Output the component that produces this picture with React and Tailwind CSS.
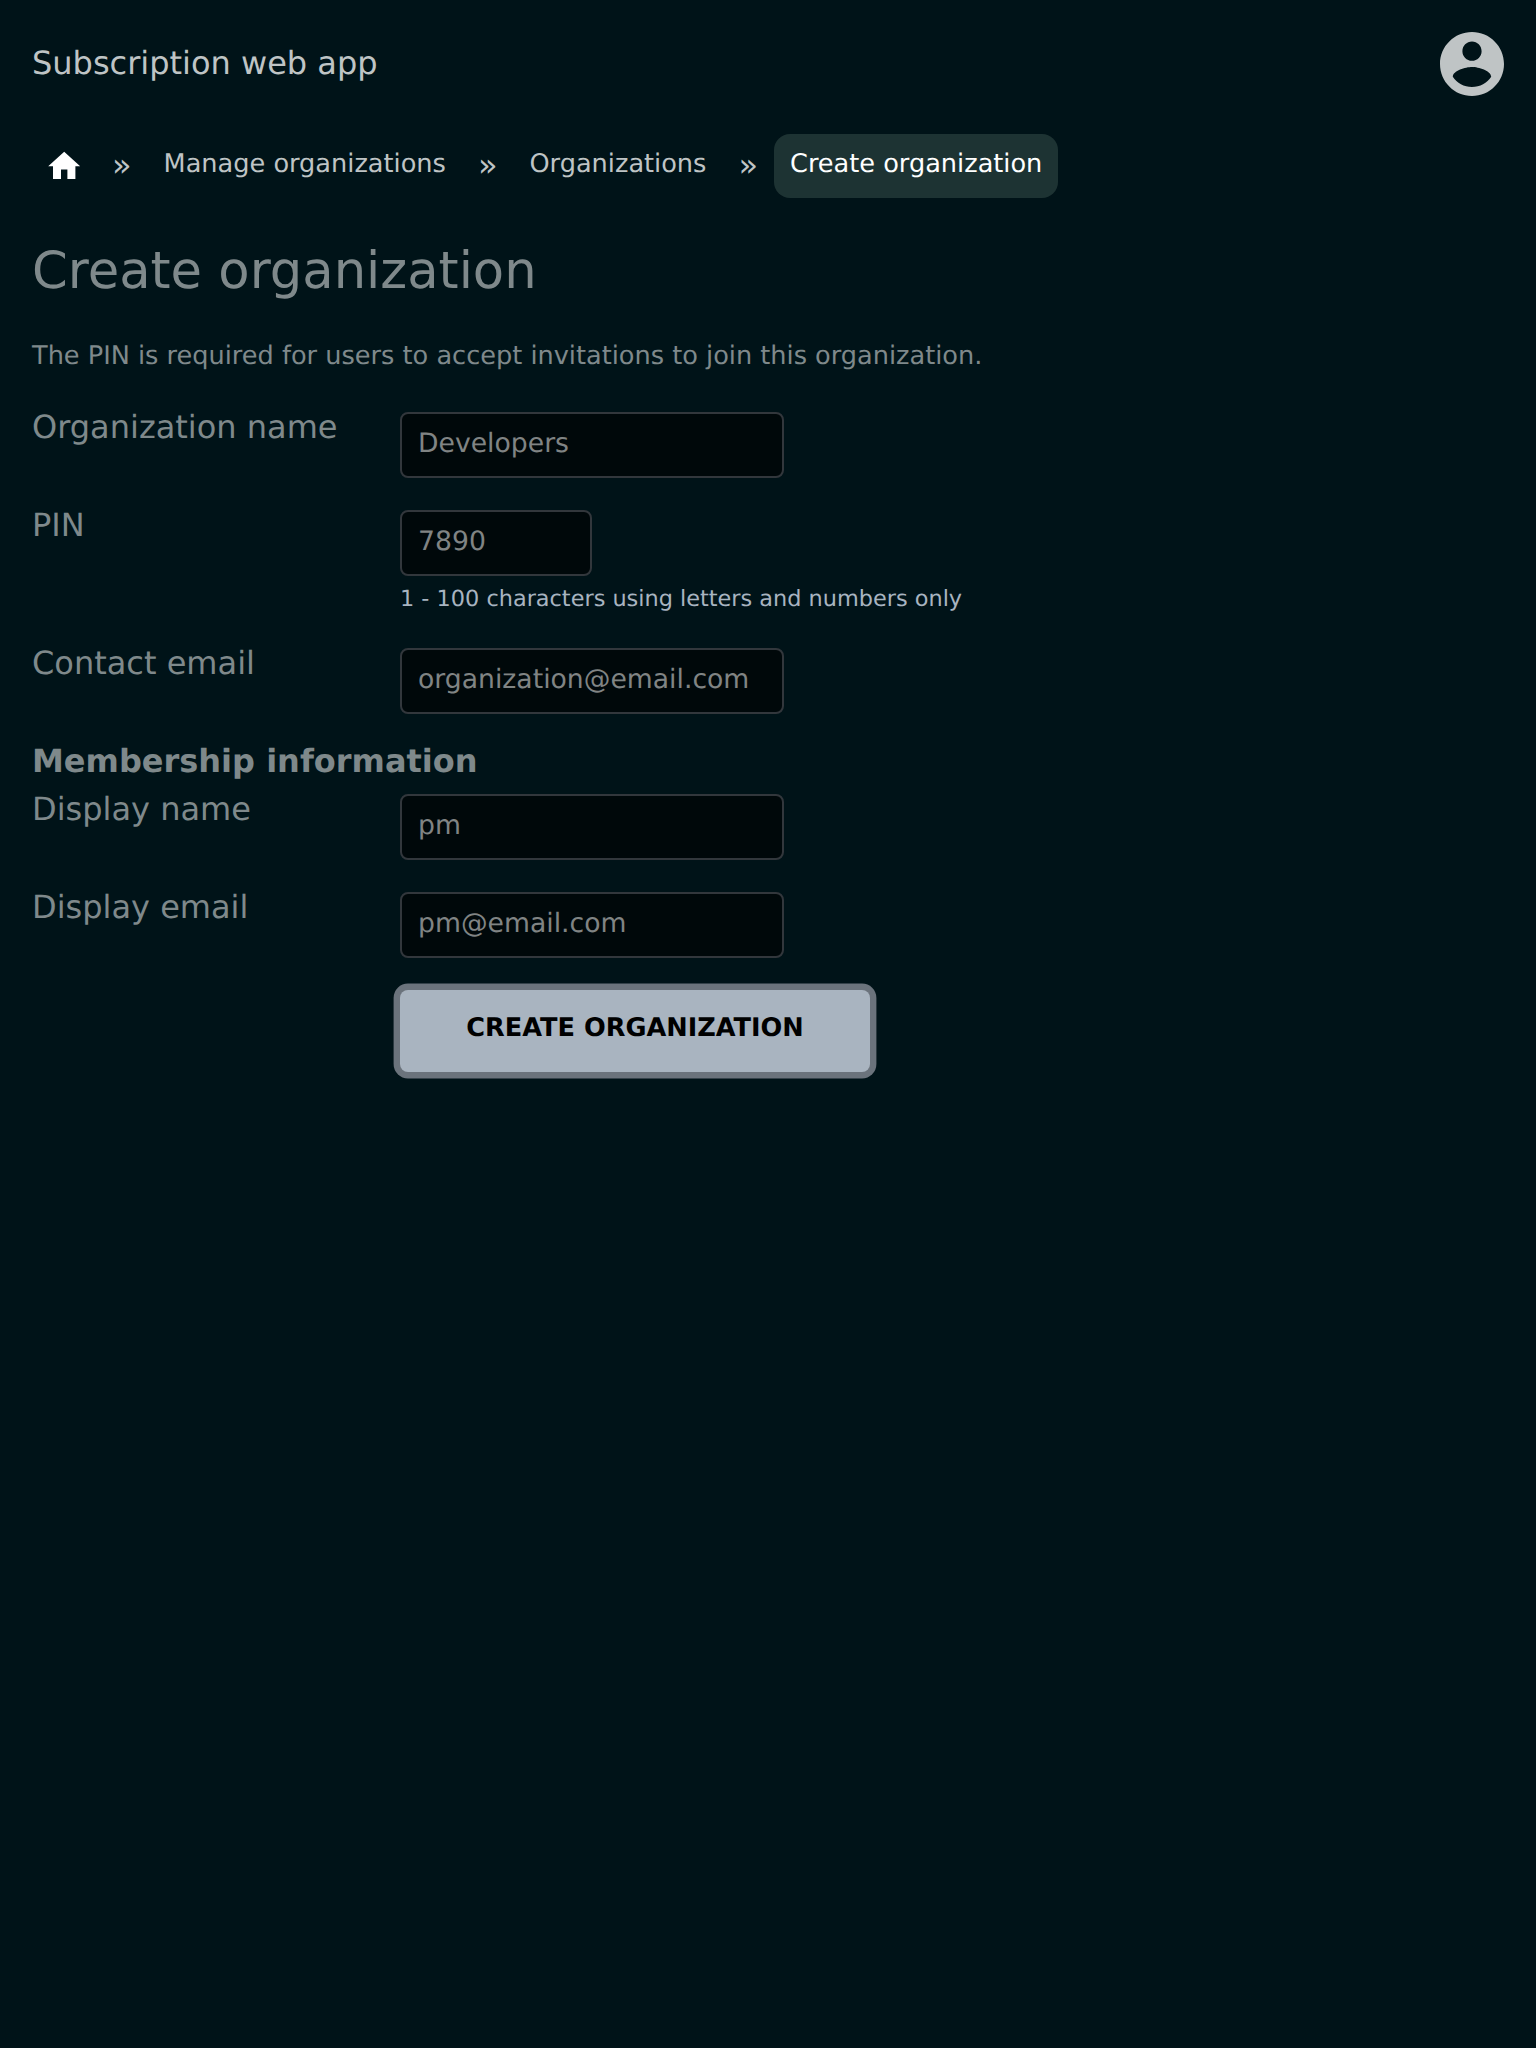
const field =
  'block h-[66px] rounded-lg border-2 border-[#32373c] bg-[#00080a] px-4 pb-1 text-[26.667px] text-[#808484] outline-none';

function Chevron() {
  return <span className="w-[19.6px] text-[32px] leading-[62px] text-[#bfc4c5]">»</span>;
}

function Crumb({ children }) {
  return (
    <a className="h-16 px-4 text-[25.6px] leading-[60px] whitespace-nowrap text-[#bfc4c5]">{children}</a>
  );
}

function Row({ label, hint, value, narrow }) {
  return (
    <div className="mb-8 flex items-start">
      <label className="w-[368px] text-[32px] leading-[30px] text-[#7f898b]">{label}</label>
      <div>
        <input
          className={narrow ? `${field} w-48` : `${field} w-96`}
          defaultValue={value}
        />
        {hint && (
          <p className="mt-2 h-8 text-[22.4px] leading-[31px] text-[#a8b4c0]">{hint}</p>
        )}
      </div>
    </div>
  );
}

export default function App() {
  return (
    <div className="h-[2048px] w-full overflow-hidden bg-[#001318] [font-family:'DejaVu_Sans',sans-serif] [text-rendering:geometricPrecision] [&_input]:[text-rendering:geometricPrecision] [&_button]:[text-rendering:geometricPrecision]">
      <header className="flex h-32 items-center justify-between px-8">
        <span className="pb-[2px] text-[32px] text-[#bfc4c5]">Subscription web app</span>
        <svg className="size-16 fill-[#bfc4c5]" viewBox="2 2 20 20">
          <path d="M12 2C6.48 2 2 6.48 2 12s4.48 10 10 10 10-4.48 10-10S17.52 2 12 2zm0 3c1.66 0 3 1.34 3 3s-1.34 3-3 3-3-1.34-3-3 1.34-3 3-3zm0 14.2c-2.5 0-4.71-1.28-6-3.22.03-1.99 4-3.08 6-3.08 1.99 0 5.97 1.09 6 3.08-1.29 1.94-3.5 3.22-6 3.22z" />
        </svg>
      </header>

      <nav className="mt-[6px] flex h-16 items-start px-8">
        <a className="flex h-16 w-16 justify-center pt-[13px]">
          <svg className="size-[38.4px] shrink-0 fill-white" viewBox="0 0 24 24">
            <path d="M10 20v-6h4v6h5v-8h3L12 3 2 12h3v8z" />
          </svg>
        </a>
        <span className="w-4" />
        <Chevron />
        <span className="w-4" />
        <Crumb>Manage organizations</Crumb>
        <span className="w-4" />
        <Chevron />
        <span className="w-4" />
        <Crumb>Organizations</Crumb>
        <span className="w-4" />
        <Chevron />
        <span className="w-4" />
        <a className="h-16 rounded-2xl bg-[#1d3333] px-4 text-[25.6px] leading-[60px] whitespace-nowrap text-white">
          Create organization
        </a>
      </nav>

      <main className="px-8">
        <h1 className="mt-[41px] text-[51.2px] leading-[64px] text-[#7f898b]">Create organization</h1>
        <p className="mt-9 text-[25.6px] leading-[34px] text-[#7f898b]">
          The PIN is required for users to accept invitations to join this organization.
        </p>
        <form className="mt-[39px]">
          <Row label="Organization name" value="Developers" />
          <Row label="PIN" value="7890" narrow hint="1 - 100 characters using letters and numbers only" />
          <Row label="Contact email" value="organization@email.com" />
          <h2 className="h-12 text-[32px] leading-[30px] font-bold text-[#7f898b]">Membership information</h2>
          <Row label="Display name" value="pm" />
          <Row label="Display email" value="pm@email.com" />
          <button
            type="button"
            className="ml-[368px] block h-[82px] w-[470px] rounded-lg bg-[#a9b4c0] pb-[6px] text-[25.6px] font-bold text-black shadow-[0_0_0_6.4px_#6b737c]"
          >
            CREATE ORGANIZATION
          </button>
        </form>
      </main>
    </div>
  );
}
